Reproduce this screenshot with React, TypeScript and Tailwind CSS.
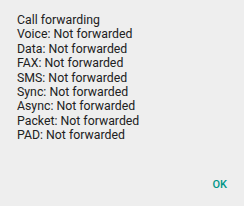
const lines = [
  'Call forwarding',
  'Voice: Not forwarded',
  'Data: Not forwarded',
  'FAX: Not forwarded',
  'SMS: Not forwarded',
  'Sync: Not forwarded',
  'Async: Not forwarded',
  'Packet: Not forwarded',
  'PAD: Not forwarded',
];

export default function App() {
  return (
    <div
      className="w-[244px] h-[206px] bg-[#eeeeee] flex flex-col overflow-hidden"
      style={{ fontFamily: 'Roboto, "Noto Sans", sans-serif' }}
    >
      <div className="pt-[13px] pl-[17px] text-[12.3px] leading-[14.4px] text-[#212121]">
        {lines.map((l) => (
          <div key={l}>{l}</div>
        ))}
      </div>
      <div className="flex justify-end pr-[17px] mt-[35px]">
        <button className="text-[11px] leading-[14px] font-medium text-[#009688]">OK</button>
      </div>
    </div>
  );
}
